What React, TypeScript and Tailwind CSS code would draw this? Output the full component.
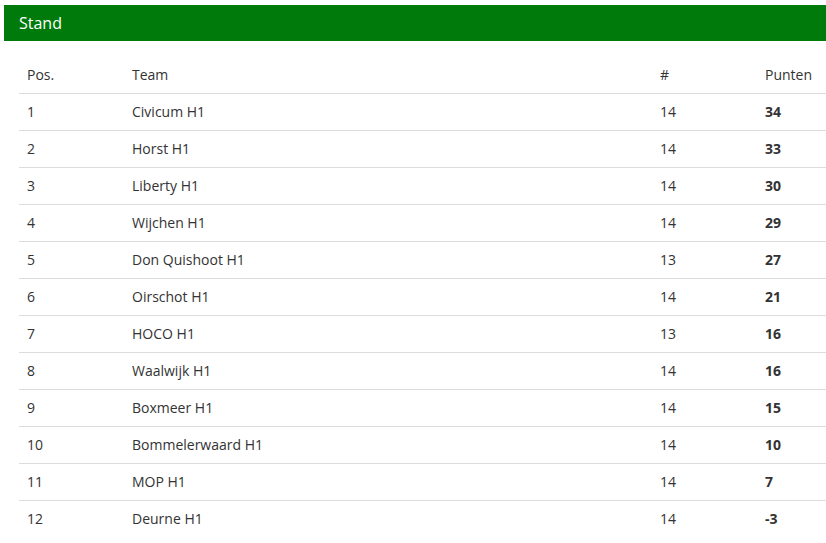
const standings = [
  { pos: 1, team: "Civicum H1", played: 14, points: 34 },
  { pos: 2, team: "Horst H1", played: 14, points: 33 },
  { pos: 3, team: "Liberty H1", played: 14, points: 30 },
  { pos: 4, team: "Wijchen H1", played: 14, points: 29 },
  { pos: 5, team: "Don Quishoot H1", played: 13, points: 27 },
  { pos: 6, team: "Oirschot H1", played: 14, points: 21 },
  { pos: 7, team: "HOCO H1", played: 13, points: 16 },
  { pos: 8, team: "Waalwijk H1", played: 14, points: 16 },
  { pos: 9, team: "Boxmeer H1", played: 14, points: 15 },
  { pos: 10, team: "Bommelerwaard H1", played: 14, points: 10 },
  { pos: 11, team: "MOP H1", played: 14, points: 7 },
  { pos: 12, team: "Deurne H1", played: 14, points: -3 },
];

const App = () => {
  return (
    <div
      className="pt-[5px] pl-[4px] bg-white text-[14px] text-[#333]"
      style={{ fontFamily: '"Open Sans", sans-serif' }}
    >
      <div className="h-[36px] bg-[#007a0a] text-white text-[16px] pl-[15px] flex items-center">
        Stand
      </div>
      <div className="pl-[15px] pt-[15px]">
        <table className="w-full border-collapse text-left">
          <thead>
            <tr className="h-[37px]">
              <th className="font-normal pl-[8px] w-[105px]">Pos.</th>
              <th className="font-normal pl-[8px] w-[528px]">Team</th>
              <th className="font-normal pl-[8px] w-[105px]">#</th>
              <th className="font-normal pl-[8px]">Punten</th>
            </tr>
          </thead>
          <tbody>
            {standings.map((row) => (
              <tr key={row.pos} className="h-[37px] border-t border-[#dddddd]">
                <td className="pl-[8px]">{row.pos}</td>
                <td className="pl-[8px]">{row.team}</td>
                <td className="pl-[8px]">{row.played}</td>
                <td className="pl-[8px] font-bold">{row.points}</td>
              </tr>
            ))}
          </tbody>
        </table>
      </div>
    </div>
  );
};

export default App;
